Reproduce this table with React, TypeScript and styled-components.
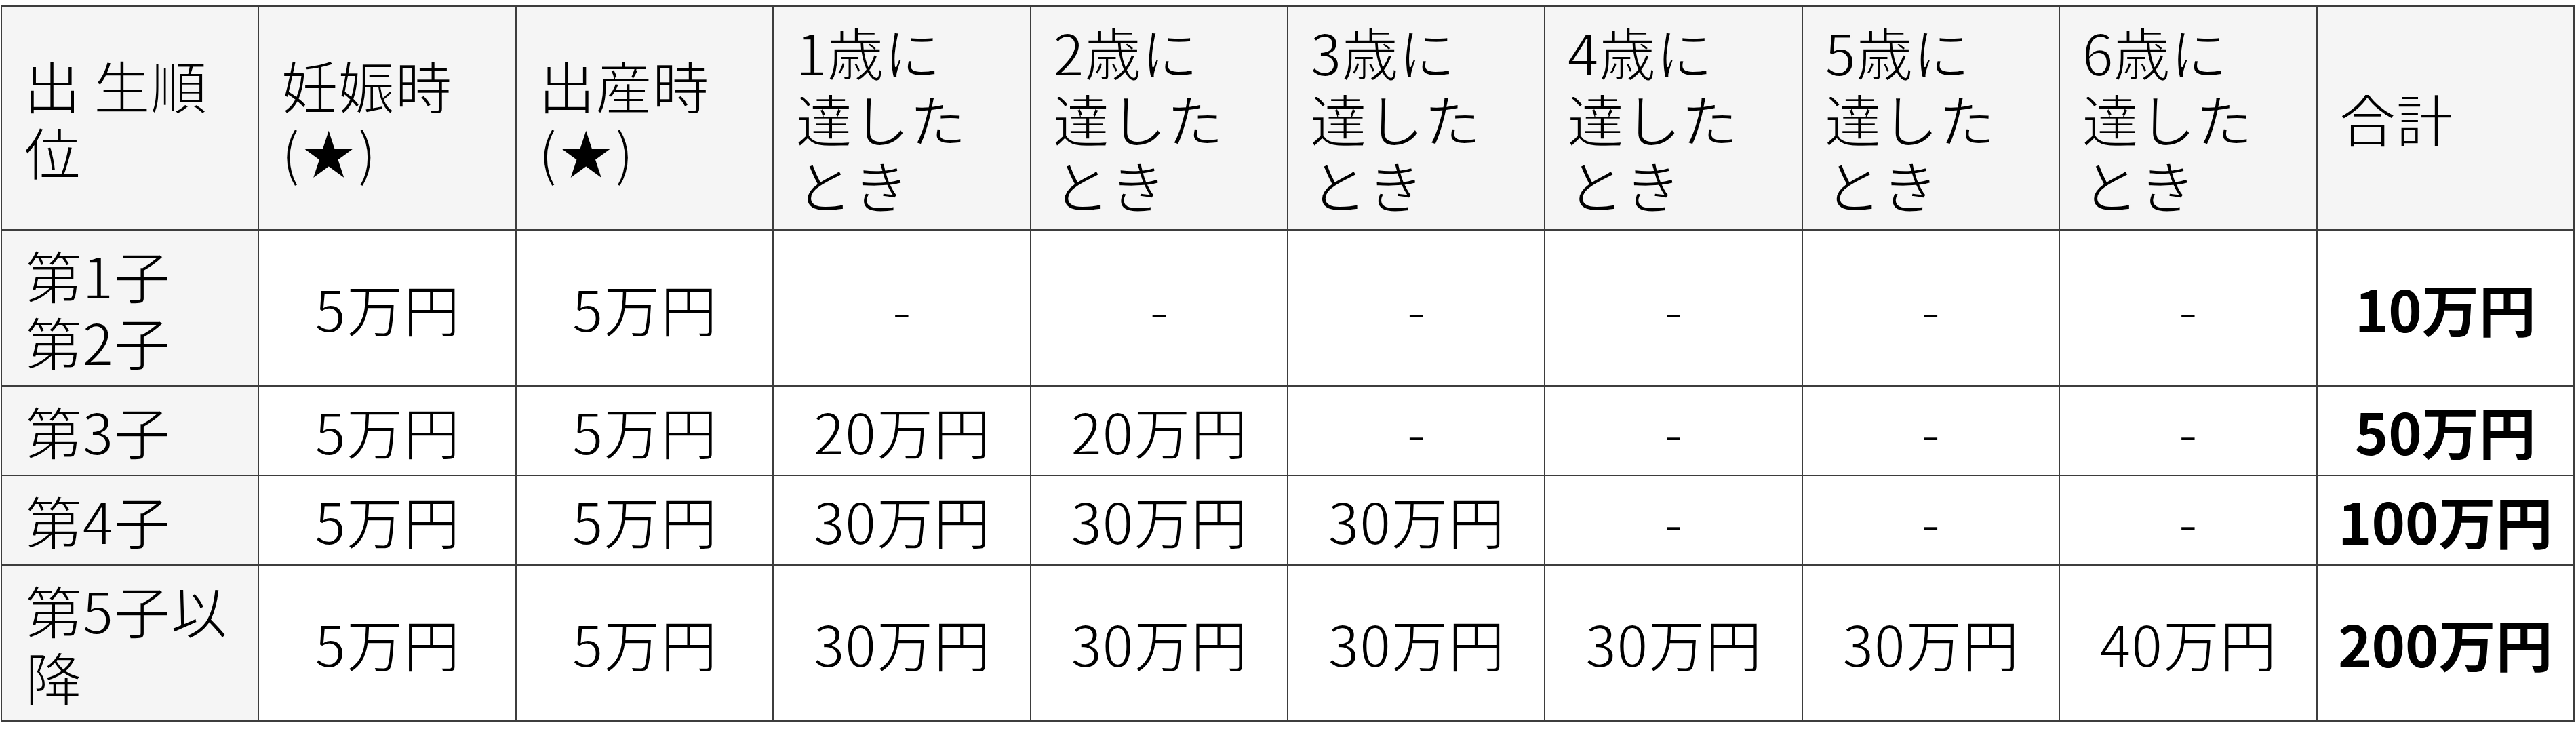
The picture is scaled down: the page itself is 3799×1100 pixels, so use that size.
import React from "react";
import styled, { createGlobalStyle } from "styled-components";

const Global = createGlobalStyle`
  html, body {
    margin: 0;
    padding: 0;
    background: #ffffff;
  }
  body {
    font-family: "Noto Sans CJK JP", "Noto Sans", sans-serif;
    color: #000;
  }
`;

const Page = styled.div`
  padding: 8px 0 0 1px;
`;

const Table = styled.table`
  width: 3796px;
  border-collapse: collapse;
  table-layout: fixed;
  font-size: 84px;
  font-weight: 400;
  line-height: 98px;
`;

const HeadCell = styled.th`
  background: #f5f5f5;
  border: 2px solid #3d3d3d;
  padding: 17px 32px;
  text-align: left;
  vertical-align: middle;
  font-weight: 400;
  -webkit-text-stroke: 2px #f5f5f5;
`;

const RowHead = styled.th`
  background: #f5f5f5;
  border: 2px solid #3d3d3d;
  padding: 16px 34px;
  text-align: left;
  vertical-align: middle;
  font-weight: 400;
  -webkit-text-stroke: 2px #f5f5f5;
`;

const Cell = styled.td<{ $bold?: boolean }>`
  border: 2px solid #3d3d3d;
  padding: 16px 10px;
  text-align: center;
  vertical-align: middle;
  font-weight: ${(p) => (p.$bold ? 700 : 400)};
  background: #ffffff;
  -webkit-text-stroke: ${(p) => (p.$bold ? "0" : "2px #ffffff")};
`;

const headers: string[][] = [
  ["出 生順", "位"],
  ["妊娠時", "(★)"],
  ["出産時", "(★)"],
  ["1歳に", "達した", "とき"],
  ["2歳に", "達した", "とき"],
  ["3歳に", "達した", "とき"],
  ["4歳に", "達した", "とき"],
  ["5歳に", "達した", "とき"],
  ["6歳に", "達した", "とき"],
  ["合計"],
];

const rows: { label: string[]; values: string[]; total: string }[] = [
  { label: ["第1子", "第2子"], values: ["5万円", "5万円", "-", "-", "-", "-", "-", "-"], total: "10万円" },
  { label: ["第3子"], values: ["5万円", "5万円", "20万円", "20万円", "-", "-", "-", "-"], total: "50万円" },
  { label: ["第4子"], values: ["5万円", "5万円", "30万円", "30万円", "30万円", "-", "-", "-"], total: "100万円" },
  { label: ["第5子以", "降"], values: ["5万円", "5万円", "30万円", "30万円", "30万円", "30万円", "30万円", "40万円"], total: "200万円" },
];

const Lines: React.FC<{ lines: string[] }> = ({ lines }) => (
  <>
    {lines.map((l, i) => (
      <React.Fragment key={i}>
        {i > 0 && <br />}
        {l}
      </React.Fragment>
    ))}
  </>
);

export default function App() {
  return (
    <>
      <Global />
      <Page>
        <Table>
          <thead>
            <tr>
              {headers.map((h, i) => (
                <HeadCell key={i}>
                  <Lines lines={h} />
                </HeadCell>
              ))}
            </tr>
          </thead>
          <tbody>
            {rows.map((r, i) => (
              <tr key={i}>
                <RowHead>
                  <Lines lines={r.label} />
                </RowHead>
                {r.values.map((v, j) => (
                  <Cell key={j}>{v}</Cell>
                ))}
                <Cell $bold>{r.total}</Cell>
              </tr>
            ))}
          </tbody>
        </Table>
      </Page>
    </>
  );
}
